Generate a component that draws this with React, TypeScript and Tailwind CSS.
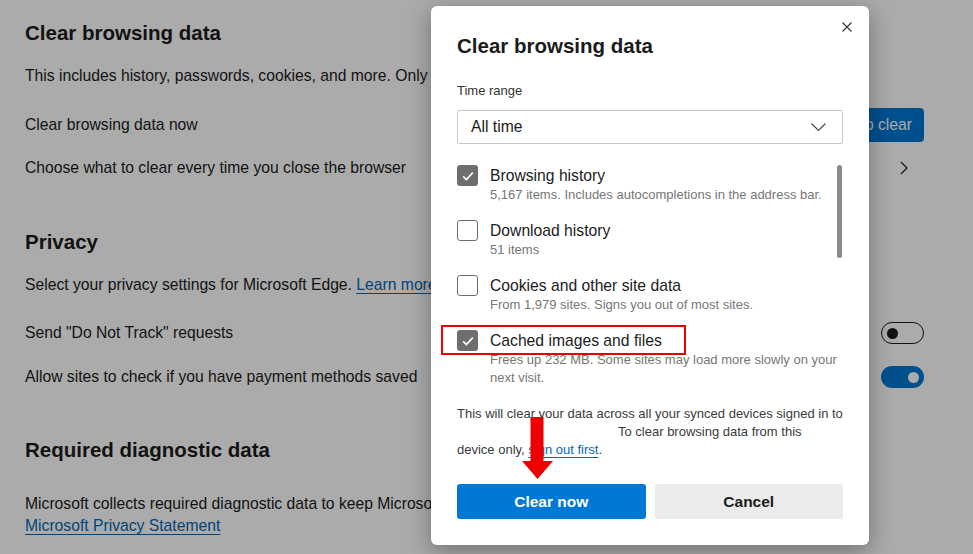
import React from "react";

type Item = { label: string; sub: string[]; checked: boolean };

const items: Item[] = [
  {
    label: "Browsing history",
    sub: ["5,167 items. Includes autocompletions in the address bar."],
    checked: true,
  },
  { label: "Download history", sub: ["51 items"], checked: false },
  {
    label: "Cookies and other site data",
    sub: ["From 1,979 sites. Signs you out of most sites."],
    checked: false,
  },
  {
    label: "Cached images and files",
    sub: ["Frees up 232 MB. Some sites may load more slowly on your", "next visit."],
    checked: true,
  },
];

function Toggle({ on }: { on: boolean }) {
  if (on) {
    return (
      <div className="w-[43px] h-[22px] rounded-full bg-[#0078d4] flex items-center justify-end pr-[5px]">
        <div className="w-[11px] h-[11px] rounded-full bg-white" />
      </div>
    );
  }
  return (
    <div className="w-[43px] h-[22px] rounded-full border border-[#1b1b1b] flex items-center pl-[5px]">
      <div className="w-[11px] h-[11px] rounded-full bg-[#1b1b1b]" />
    </div>
  );
}

function CheckBox({ checked }: { checked: boolean }) {
  if (checked) {
    return (
      <div className="w-[21px] h-[21px] -mt-[1px] rounded-[3px] bg-[#6e6e6e] flex items-center justify-center shrink-0">
        <svg width="14" height="14" viewBox="0 0 14 14">
          <path d="M2.2 7.4 L5.4 10.6 L11.8 3.6" fill="none" stroke="#fff" strokeWidth="1.6" />
        </svg>
      </div>
    );
  }
  return <div className="w-[21px] h-[21px] -mt-[1px] rounded-[3px] border border-[#6e6e6e] bg-white shrink-0" />;
}

function SettingsPage() {
  return (
    <div className="h-full bg-white text-[#1b1b1b] pl-[25px] pr-[49px] pt-[19px] text-[15.7px]">
      <h2 className="text-[20.5px] leading-[28px] font-semibold">Clear browsing data</h2>
      <p className="mt-[19px] leading-[20px] whitespace-nowrap w-[406px] overflow-hidden">
        This includes history, passwords, cookies, and more. Only data from this profile will be deleted.
      </p>
      <div className="mt-[17px] flex items-center justify-between h-[43px]">
        <span>Clear browsing data now</span>
        <button className="h-[34px] px-[12px] rounded-[4px] bg-[#0078d4] text-white">Choose what to clear</button>
      </div>
      <div className="flex items-center justify-between h-[43px]">
        <span>Choose what to clear every time you close the browser</span>
        <svg width="8" height="14" viewBox="0 0 8 14" className="mr-[16px]">
          <path d="M1 1 L7 7 L1 13" fill="none" stroke="#1b1b1b" strokeWidth="1.2" />
        </svg>
      </div>

      <h2 className="mt-[39px] text-[20.5px] leading-[28px] font-semibold">Privacy</h2>
      <p className="mt-[19px] leading-[20px] whitespace-nowrap w-[406px] overflow-hidden">
        Select your privacy settings for Microsoft Edge.{" "}
        <a className="text-[#0067b8] underline underline-offset-[3px]">Learn more about these settings</a>
      </p>
      <div className="mt-[16px] flex items-center justify-between h-[44px]">
        <span>Send "Do Not Track" requests</span>
        <Toggle on={false} />
      </div>
      <div className="flex items-center justify-between h-[44px]">
        <span>Allow sites to check if you have payment methods saved</span>
        <Toggle on={true} />
      </div>

      <h2 className="mt-[37px] text-[20.5px] leading-[28px] font-semibold">Required diagnostic data</h2>
      <p className="mt-[29px] leading-[22px] whitespace-nowrap w-[406px] overflow-hidden">
        Microsoft collects required diagnostic data to keep Microsoft Edge secure, up to date and performing as expected.
      </p>
      <a className="block leading-[22px] text-[#0067b8] underline underline-offset-[3px] w-fit">Microsoft Privacy Statement</a>
    </div>
  );
}

function Dialog() {
  return (
    <div className="absolute left-[431px] top-[6px] w-[438px] h-[539px] bg-white rounded-[6px] shadow-[0_6px_24px_rgba(0,0,0,0.35)] px-[26px] pt-[26px] text-[#1b1b1b]">
      <button className="absolute right-[17px] top-[16px] w-[10px] h-[10px]">
        <svg width="10" height="10" viewBox="0 0 10 10">
          <path d="M0.5 0.5 L9.5 9.5 M9.5 0.5 L0.5 9.5" stroke="#333" strokeWidth="1.1" />
        </svg>
      </button>

      <h2 className="text-[20.5px] leading-[28px] font-semibold">Clear browsing data</h2>

      <div className="mt-[22px] text-[13px] leading-[18px] text-[#333]">Time range</div>
      <div className="mt-[10px] h-[34px] border border-[#c6c6c6] rounded-[2px] flex items-center justify-between pl-[13px] pr-[16px] text-[15.7px]">
        <span>All time</span>
        <svg width="15" height="8" viewBox="0 0 15 8">
          <path d="M0.5 0.5 L7.5 7.5 L14.5 0.5" fill="none" stroke="#444" strokeWidth="1.1" />
        </svg>
      </div>

      <div className="mt-[21px] flex">
        <div className="flex-1 flex flex-col gap-[17px] pt-[1px]">
          {items.map((it) => (
            <div key={it.label} className="flex gap-[12px]">
              <CheckBox checked={it.checked} />
              <div>
                <div className="text-[15.7px] leading-[20px]">{it.label}</div>
                <div className="text-[13px] leading-[18px] text-[#767676] whitespace-nowrap">
                  {it.sub.map((s, i) => (
                    <div key={i}>{s}</div>
                  ))}
                </div>
              </div>
            </div>
          ))}
        </div>
        <div className="w-[6px] h-[93px] rounded-full bg-[#8a8a8a] mr-[1px]" />
      </div>

      <p className="mt-[18px] text-[13px] leading-[18px] text-[#3b3b3b]">
        This will clear your data across all your synced devices signed in to
        <br />
        <span className="inline-block w-[161px]" />
        To clear browsing data from this
        <br />
        device only, <a className="text-[#0067b8] underline underline-offset-[3px]">sign out first</a>.
      </p>

      <div className="mt-[25px] flex gap-[9px]">
        <button className="flex-1 h-[35px] rounded-[3px] bg-[#0078d4] text-white text-[15.5px] font-semibold">
          Clear now
        </button>
        <button className="flex-1 h-[35px] rounded-[3px] bg-[#ebebeb] text-[#1b1b1b] text-[15.5px] font-semibold">
          Cancel
        </button>
      </div>

      <div className="absolute left-[10px] top-[319px] w-[245px] h-[30px] border-2 border-[#ee0000]" />

      <svg className="absolute left-[91px] top-[411px]" width="31" height="62" viewBox="0 0 31 62">
        <path d="M8.5 0 H21.5 V44 H31 L15.5 62 L0 44 H8.5 Z" fill="#ee0000" />
      </svg>
    </div>
  );
}

export default function App() {
  return (
    <div className="relative w-[973px] h-[554px] overflow-hidden font-['Liberation_Sans',Arial,sans-serif]">
      <SettingsPage />
      <div className="absolute inset-0 bg-[rgba(0,0,0,0.33)]" />
      <Dialog />
    </div>
  );
}
